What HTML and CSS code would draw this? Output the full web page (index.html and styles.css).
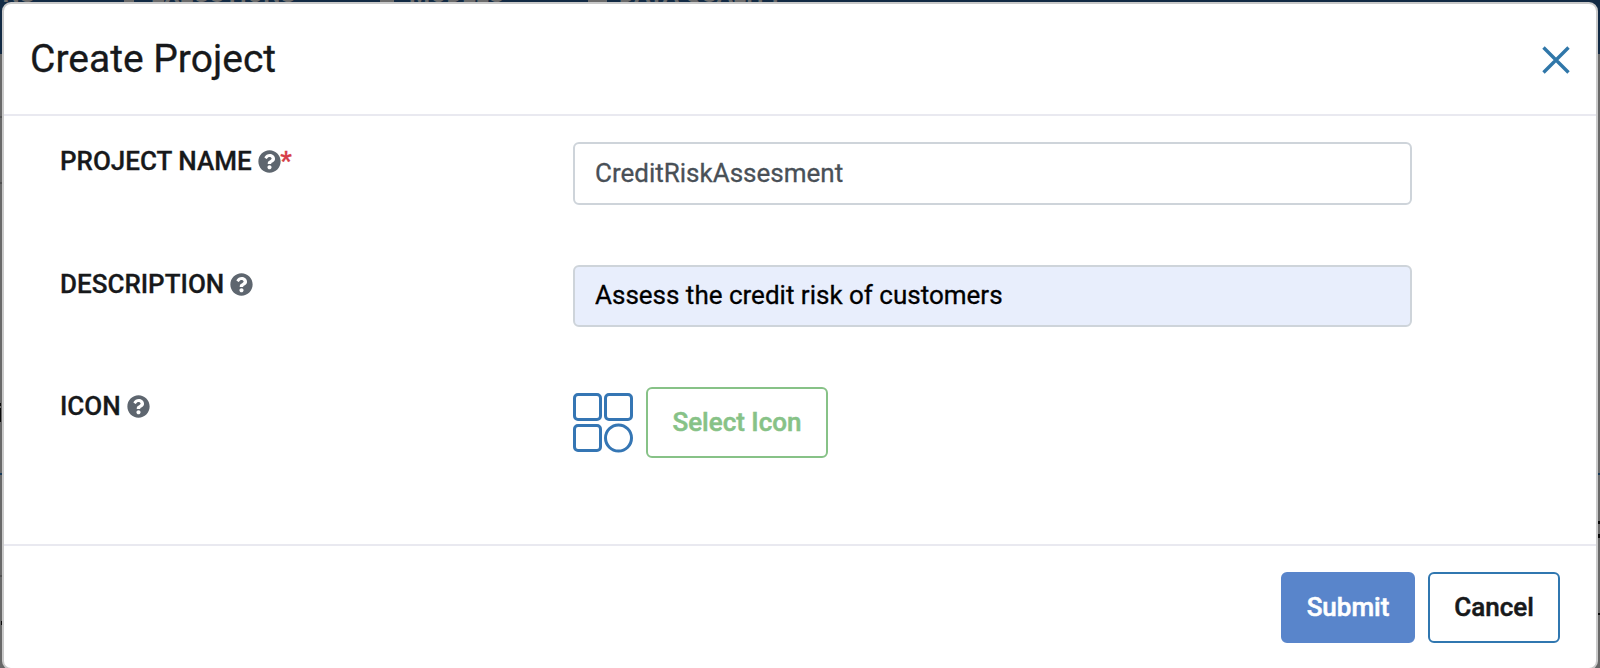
FILE: index.html
```html
<!DOCTYPE html>
<html lang="en">
<head>
<meta charset="utf-8">
<title>Create Project</title>
<link rel="stylesheet" href="styles.css">
</head>
<body>
<svg class="defs" width="0" height="0" aria-hidden="true">
  <symbol id="help" viewBox="0 0 512 512"><path d="M504 256c0 137-111 248-248 248S8 393 8 256C8 119.100 119 8 256 8s248 111.100 248 248zM262.700 90c-54.500 0-89.300 23-116.500 63.800-3.500 5.300-2.400 12.400 2.700 16.300l34.700 26.300c5.200 3.900 12.600 3 16.700-2.100 17.900-22.700 30.100-35.800 57.300-35.800 20.400 0 45.700 13.100 45.700 33 0 15-12.400 22.700-32.500 34C247.100 238.500 216 254.900 216 296v4c0 6.600 5.400 12 12 12h56c6.600 0 12-5.400 12-12v-1.300c0-28.500 83.200-29.600 83.200-106.700 0-58-60.200-102-116.500-102zM256 338c-25.400 0-46 20.600-46 46s20.600 46 46 46 46-20.600 46-46-20.600-46-46-46z"/></symbol>
</svg>
<div class="backdrop">
  <nav class="nav"><span class="nav-1">ONS</span><i class="mark mark-1"></i><span class="nav-2">EXECUTIONS</span><i class="mark mark-2"></i><span class="nav-3">MODELS</span><i class="mark mark-3"></i><span class="nav-4">DATA QUALITY</span></nav>
  <svg class="page" width="1600" height="668"><path d="M0 117h2M0 183h2M0 576h2" stroke="#505050" stroke-width="2"/><path d="M0 474h2M1598 474h2" stroke="#183b59" stroke-width="2"/><path d="M0 403h1v3h-1zM0 408h1v14h-1zM1 621h1v4h-1zM1598 521h2v3h-2zM1598 534h2v4h-2zM1598 613h2v2h-2z" fill="#080808"/></svg>
</div>
<main class="modal">
  <header class="header">
    <h1 class="title">Create Project</h1>
    <button class="close" aria-label="Close"><svg width="28" height="28" viewBox="0 0 28 28"><path d="M1.500 1.500 26.500 26.500M26.500 1.500 1.500 26.500"/></svg></button>
  </header>
  <form class="form">
    <div class="row row-name">
      <label class="label">PROJECT NAME <svg class="help"><use href="#help"/></svg><span class="required">*</span></label>
      <input class="input" value="CreditRiskAssesment">
    </div>
    <div class="row row-description">
      <label class="label">DESCRIPTION <svg class="help"><use href="#help"/></svg></label>
      <input class="input filled" value="Assess the credit risk of customers">
    </div>
    <div class="row row-icon">
      <label class="label">ICON <svg class="help"><use href="#help"/></svg></label>
      <div class="picker">
        <svg class="grid-icon" width="60" height="60" viewBox="0 0 60 60"><rect x="1.500" y="1.500" width="26" height="25" rx="3.500"/><rect x="32.500" y="1.500" width="26" height="25" rx="3.500"/><rect x="1.500" y="32.500" width="26" height="25" rx="3.500"/><circle cx="45.500" cy="45" r="13"/></svg>
        <button type="button" class="btn select">Select Icon</button>
      </div>
    </div>
  </form>
  <footer class="footer">
    <button class="btn submit">Submit</button>
    <button class="btn cancel">Cancel</button>
  </footer>
</main>
</body>
</html>
```
FILE: styles.css
```css
* { box-sizing: border-box; }
body { margin: 0; height: 668px; overflow: hidden; font-family: Roboto, sans-serif; font-size: 26px; color: #17191b; background: #686868; padding: 2px; }
.defs { position: absolute; }
.backdrop { position: absolute; inset: 0; z-index: -1; background: linear-gradient(#122a44 54px, #686868 54px); }
.page { position: absolute; left: 0; top: 0; }
.nav { position: relative; height: 54px; color: #6b6b6b; font-size: 24px; font-weight: 700; line-height: 30px; white-space: nowrap; }
.nav span { position: absolute; top: -21px; }
.nav-1 { left: -14px; }
.nav-2 { left: 151px; }
.nav-3 { left: 409px; }
.nav-4 { left: 619px; }
.mark { position: absolute; top: 0; height: 2px; background: #6b6b6b; }
.mark-1 { left: 124px; width: 10px; }
.mark-2 { left: 380px; width: 14px; }
.mark-3 { left: 588px; width: 19px; }
.modal { height: 668px; border: 2px solid #c9c9c9; border-radius: 9px; background: #fff; display: flex; flex-direction: column; }
.header { height: 112px; border-bottom: 2px solid #e9e9f0; padding: 0 26px 0 26px; display: flex; align-items: center; justify-content: space-between; }
.title { margin: 0; font-size: 39px; font-weight: 400; line-height: 46px; -webkit-text-stroke: .3px; }
.close { border: 0; background: none; padding: 2px 0 0; display: flex; }
.close svg { fill: none; stroke: #3077a9; stroke-width: 3.400; }
.form { height: 430px; padding: 26px 0 0 56px; border-bottom: 2px solid #e9e9f0; }
.row { display: grid; grid-template-columns: 513px 839px; align-items: start; }
.row-name { height: 123px; }
.row-description { height: 122px; }
.label { font-weight: 500; line-height: 38px; white-space: nowrap; -webkit-text-stroke: .3px; }
.help { width: 23px; height: 23px; margin-left: -.5px; margin-right: -.5px; fill: #5e666f; vertical-align: -2.5px; -webkit-text-stroke: 0; }
.required { color: #d63d48; }
.input { width: 839px; height: 63px; border: 2px solid #ced4da; border-radius: 6px; padding: 0 20px 2px; font: 400 26px Roboto, sans-serif; color: #495057; background: #fff; -webkit-text-stroke: .3px; }
.filled { height: 62px; background: #e8eefc; color: #000; }
.picker { display: flex; align-items: center; gap: 13px; }
.grid-icon { fill: none; stroke: #3576b4; stroke-width: 3; }
.btn { height: 71px; border: 2px solid; border-radius: 6px; background: #fff; font: 500 26px Roboto, sans-serif; padding: 0 0 2px; -webkit-text-stroke: .5px; }
.select { width: 182px; border-color: #87c287; color: #87c287; }
.footer { display: flex; justify-content: flex-end; align-items: flex-start; gap: 13px; padding: 26px 36px 0 0; }
.submit { width: 134px; background: #5985cb; border-color: #5985cb; color: #fff; }
.cancel { width: 132px; border-color: #3077b0; color: #17191b; }
```
